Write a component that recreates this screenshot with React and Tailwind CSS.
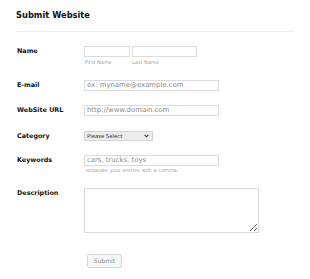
import React from "react";

function Label({ children }) {
  return (
    <div className="w-[68px] shrink-0 pl-px text-[6.4px] font-bold leading-[11px] text-[#111]">
      {children}
    </div>
  );
}

function TextBox({ w, value }) {
  return (
    <div
      className={`h-[11px] ${w} border border-[#dcdcdc] bg-white pl-[2px] text-[6.9px] leading-[9px] text-[#8a8a8a] whitespace-nowrap overflow-hidden`}
    >
      {value}
    </div>
  );
}

export default function App() {
  return (
    <div className="w-[310px] h-[279px] bg-white px-4 font-['DejaVu_Sans',Verdana,sans-serif] overflow-hidden">
      <h1 className="pt-[10px] text-[8.3px] font-bold leading-[10px] text-[#111]">
        Submit Website
      </h1>
      <div className="mt-[11px] h-px bg-[#eeeeee]" />

      {/* Name */}
      <div className="mt-[14px] flex">
        <Label>Name</Label>
        <div className="flex gap-[2px]">
          <div className="flex flex-col">
            <TextBox w="w-[46px]" value="" />
            <div className="mt-[2px] pl-px text-[5px] leading-[7px] text-[#a0a0a0]">First Name</div>
          </div>
          <div className="flex flex-col">
            <TextBox w="w-[65px]" value="" />
            <div className="mt-[2px] text-[5px] leading-[7px] text-[#a0a0a0]">Last Name</div>
          </div>
        </div>
      </div>

      {/* Email */}
      <div className="mt-[14px] flex">
        <Label>E-mail</Label>
        <TextBox w="w-[135px]" value="ex: myname@example.com" />
      </div>

      {/* URL */}
      <div className="mt-[14px] flex">
        <Label>WebSite URL</Label>
        <TextBox w="w-[135px]" value="http://www.domain.com" />
      </div>

      {/* Category */}
      <div className="mt-[15px] flex">
        <div className="w-[68px] shrink-0 pl-px text-[6.4px] font-bold leading-[10px] text-[#111]">Category</div>
        <div className="h-[10px] w-[69px] flex items-center justify-between border border-[#d4d4d4] bg-[#ececec] pl-[2px] pr-[3px] text-[5.3px] text-[#333]">
          <span className="leading-[8px]">Please Select</span>
          <svg width="5" height="4" viewBox="0 0 5 4">
            <path d="M0.6 0.8 L2.5 2.8 L4.4 0.8" fill="none" stroke="#333" strokeWidth="1.1" />
          </svg>
        </div>
      </div>

      {/* Keywords */}
      <div className="mt-[14px] flex">
        <Label>Keywords</Label>
        <div className="flex flex-col">
          <TextBox w="w-[135px]" value="cars, trucks, toys" />
          <div className="mt-px pl-[2px] text-[5px] leading-[7px] text-[#a0a0a0]">
            separate your entries with a comma.
          </div>
        </div>
      </div>

      {/* Description */}
      <div className="mt-[14px] flex">
        <Label>Description</Label>
        <textarea className="h-[45px] w-[175px] border border-[#dcdcdc] bg-white resize-y outline-none" />
      </div>

      {/* Submit */}
      <div className="mt-[21px] flex">
        <div className="w-[68px] shrink-0" />
        <button className="ml-[3px] h-[14px] w-[35px] rounded-[2px] border border-[#d8d8d8] bg-[#f6f6f6] text-[6px] leading-[12px] text-[#8a8a8a]">
          Submit
        </button>
      </div>
    </div>
  );
}
